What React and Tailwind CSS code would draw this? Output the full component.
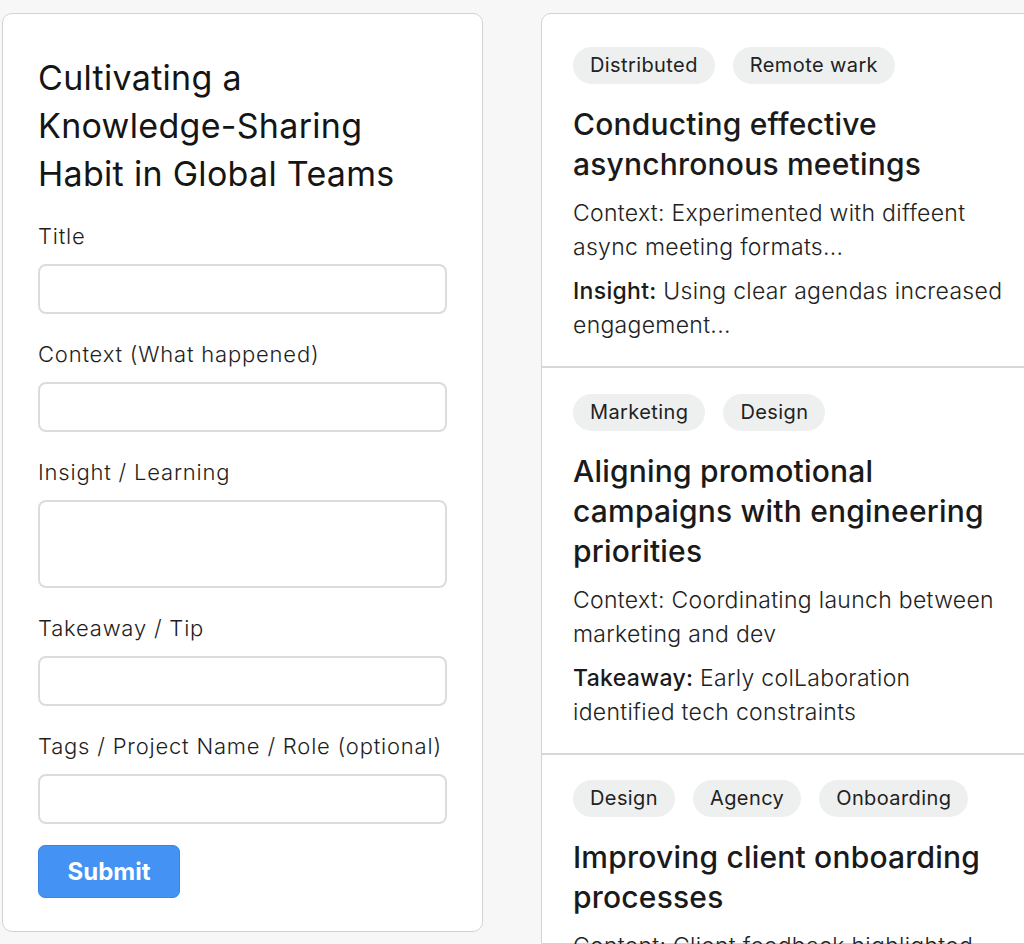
import React from 'react';

const fields = [
  { label: 'Title', h: 'h-[50px]' },
  { label: 'Context (What happened)', h: 'h-[50px]' },
  { label: 'Insight / Learning', h: 'h-[88px]', area: true },
  { label: 'Takeaway / Tip', h: 'h-[50px]' },
  { label: 'Tags / Project Name / Role (optional)', h: 'h-[50px]' },
];

const entries = [
  {
    tags: ['Distributed', 'Remote wark'],
    title: 'Conducting effective asynchronous meetings',
    context: 'Context: Experimented with diffeent async meeting formats...',
    key: 'Insight:',
    value: 'Using clear agendas increased engagement...',
    pad: 'pt-[33px]',
  },
  {
    tags: ['Marketing', 'Design'],
    title: 'Aligning promotional campaigns with engineering priorities',
    context: 'Context: Coordinating launch between marketing and dev',
    key: 'Takeaway:',
    value: 'Early colLaboration identified tech constraints',
    pad: 'pt-[26px]',
  },
  {
    tags: ['Design', 'Agency', 'Onboarding'],
    title: 'Improving client onboarding processes',
    context: 'Content: Client feedback highlighted confusion in first week',
    key: 'Takeaway:',
    value: 'A welcome checklist reduced questions',
    pad: 'pt-[25px]',
  },
];

const Tag = ({ children }) => (
  <span className="h-[37px] px-[17px] rounded-full bg-[#eef0f0] text-[20px] leading-[37px] text-[#222] tracking-[0.4px]">
    {children}
  </span>
);

const App = () => {
  return (
    <div
      className="w-[1024px] h-[944px] overflow-hidden bg-[#f7f7f7] flex gap-[58px] pl-[2px] pt-[13px] text-[#1c1c1c]"
      style={{ fontFamily: 'Inter, "Noto Sans", sans-serif' }}
    >
      {/* Form */}
      <div className="w-[481px] h-[919px] shrink-0 bg-white border border-[#d3d3d3] rounded-[10px] pt-[40px] px-[35px] flex flex-col">
        <h1 className="text-[34px] leading-[48px] font-normal text-[#151515] tracking-[0.3px] whitespace-nowrap">
          Cultivating a<br />
          Knowledge-Sharing<br />
          Habit in Global Teams
        </h1>
        <div className="mt-[23px] flex flex-col gap-[25px]">
          {fields.map((f) => (
            <div key={f.label} className="flex flex-col gap-[13px]">
              <label className="text-[22px] leading-[30px] font-light text-[#1e1e1e] tracking-[0.8px] whitespace-nowrap">
                {f.label}
              </label>
              {f.area ? (
                <textarea className={`w-[409px] ${f.h} border-2 border-[#dcdcdc] rounded-[8px] resize-none`} />
              ) : (
                <input className={`w-[409px] ${f.h} border-2 border-[#dcdcdc] rounded-[8px]`} />
              )}
            </div>
          ))}
        </div>
        <button className="mt-[21px] w-[142px] h-[53px] bg-[#4392f4] border border-[#3a86e6] rounded-[7px] text-white text-[24px] font-bold">
          Submit
        </button>
      </div>

      {/* List */}
      <div className="w-[520px] shrink-0 bg-white border border-[#d3d3d3] rounded-tl-[10px] flex flex-col">
        {entries.map((e, i) => (
          <div
            key={e.title}
            className={`${e.pad} pb-[24px] pl-[31px] pr-[52px] ${i < entries.length - 1 ? 'border-b-2 border-[#d8d8d8]' : ''}`}
          >
            <div className="flex gap-[18px]">
              {e.tags.map((t) => (
                <Tag key={t}>{t}</Tag>
              ))}
            </div>
            <h2 className="mt-[20px] text-[30px] leading-[40px] font-medium text-[#1a1a1a] tracking-[0.2px]">{e.title}</h2>
            <p className="mt-[12px] text-[23px] leading-[34px] font-light text-[#222] tracking-[0.3px]">{e.context}</p>
            <p className="mt-[10px] text-[23px] leading-[34px] font-light text-[#222] tracking-[0.3px]">
              <span className="font-medium text-[#1a1a1a]">{e.key}</span> {e.value}
            </p>
          </div>
        ))}
      </div>
    </div>
  );
};

export default App;
